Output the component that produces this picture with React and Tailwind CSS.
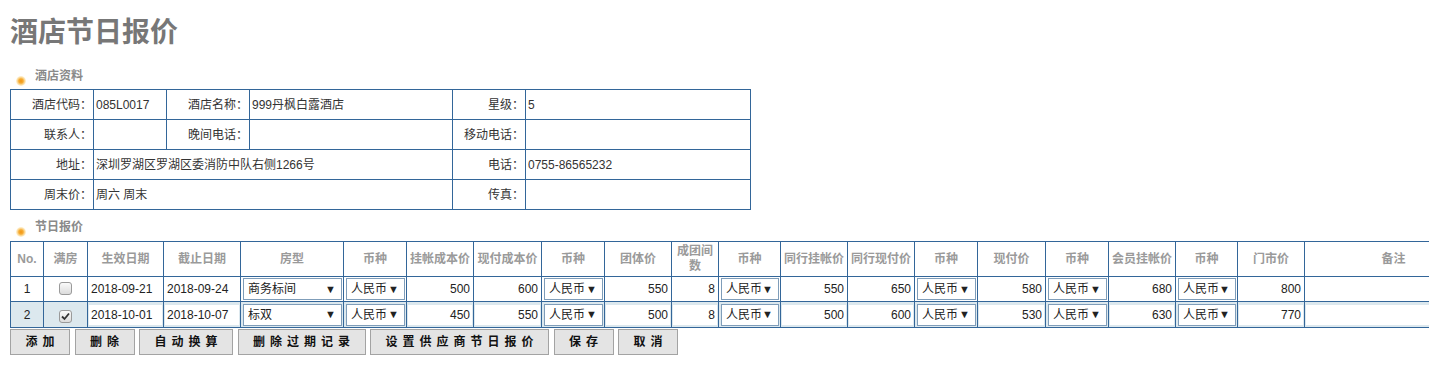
import React from 'react';

const FONT = "font-['Liberation_Sans','Noto_Sans_CJK_SC',sans-serif]";

function Bullet({ id }) {
  return (
    <svg width="10" height="10" viewBox="0 0 10 10" className="shrink-0">
      <defs>
        <radialGradient id={id}>
          <stop offset="0" stopColor="#f29410" />
          <stop offset="0.45" stopColor="#f6ad35" />
          <stop offset="1" stopColor="#fde7b0" stopOpacity="0.5" />
        </radialGradient>
      </defs>
      <circle cx="5" cy="5" r="5" fill={`url(#${id})`} />
    </svg>
  );
}

function SectionTitle({ id, children }) {
  return (
    <div className="flex items-end gap-[9px] pl-[16px]">
      <span className="mb-[-3px]">
        <Bullet id={id} />
      </span>
      <span className="text-[12px] font-bold leading-[14px] text-[#8a8a8a]">{children}</span>
    </div>
  );
}

function Sel({ value }) {
  return (
    <div className="flex h-[22px] w-full items-center justify-between border border-[#7f9db9] bg-white pl-[4px] pr-[5px] text-[12px] text-[#222]">
      <span>{value}</span>
      <span className="text-[11px]">▼</span>
    </div>
  );
}

function Check({ checked }) {
  return (
    <span className="inline-flex h-[13px] w-[13px] items-center justify-center rounded-[3px] border border-[#9a9a9a] bg-gradient-to-b from-[#fafafa] to-[#dcdcdc]">
      {checked && (
        <svg width="9" height="9" viewBox="0 0 9 9">
          <path d="M1 4.5 L3.5 7 L8 1.5" fill="none" stroke="#333" strokeWidth="1.8" />
        </svg>
      )}
    </span>
  );
}

function Box({ children, right }) {
  return (
    <div
      className={`flex h-[20px] w-full items-center bg-white px-[2px] text-[12px] text-[#222] ${
        right ? 'justify-end' : 'justify-start'
      }`}
    >
      {children}
    </div>
  );
}

const widths = [33, 44, 76, 77, 103, 63, 67, 68, 63, 67, 47, 62, 67, 67, 63, 68, 63, 67, 62, 67, 178];

const headers = [
  'No.', '满房', '生效日期', '截止日期', '房型', '币种', '挂帐成本价', '现付成本价', '币种', '团体价',
  'TEAM', '币种', '同行挂帐价', '同行现付价', '币种', '现付价', '币种', '会员挂帐价', '币种', '门市价', '备注',
];

const rows = [
  { no: 1, full: false, start: '2018-09-21', end: '2018-09-24', room: '商务标间', v: ['500', '600', '550', '8', '550', '650', '580', '680', '800'] },
  { no: 2, full: true, start: '2018-10-01', end: '2018-10-07', room: '标双', v: ['450', '550', '500', '8', '500', '600', '530', '630', '770'] },
];

const buttons = [
  ['添加', 'w-[60px]'],
  ['删除', 'w-[60px]'],
  ['自动换算', 'w-[94px]'],
  ['删除过期记录', 'w-[128px]'],
  ['设置供应商节日报价', 'w-[179px]'],
  ['保存', 'w-[60px]'],
  ['取消', 'w-[60px]'],
];

export default function App() {
  const td = 'border border-[#336699]';
  const label = `${td} text-right pr-[1px]`;
  const val = `${td} pl-[2px]`;

  return (
    <div className={`${FONT} w-full overflow-hidden bg-white text-[12px] text-[#333]`}>
      {/* Title */}
      <div className="flex h-[60px] items-start pl-[10px] pt-[16px]">
        <h1 className="text-[28px] font-bold leading-[34px] text-[#777]">酒店节日报价</h1>
      </div>

      {/* Hotel info */}
      <div className="flex h-[29px] items-end pb-[6px]">
        <SectionTitle id="b1">酒店资料</SectionTitle>
      </div>
      <div className="pl-[10px]">
        <table className="w-[740px] table-fixed border-collapse">
          <colgroup>
            <col className="w-[83px]" />
            <col className="w-[73px]" />
            <col className="w-[83px]" />
            <col className="w-[203px]" />
            <col className="w-[73px]" />
            <col className="w-[225px]" />
          </colgroup>
          <tbody>
            <tr className="h-[30px]">
              <td className={label}>酒店代码：</td>
              <td className={val}>085L0017</td>
              <td className={label}>酒店名称：</td>
              <td className={val}>999丹枫白露酒店</td>
              <td className={label}>星级：</td>
              <td className={val}>5</td>
            </tr>
            <tr className="h-[30px]">
              <td className={label}>联系人：</td>
              <td className={val}></td>
              <td className={label}>晚间电话：</td>
              <td className={val}></td>
              <td className={label}>移动电话：</td>
              <td className={val}></td>
            </tr>
            <tr className="h-[30px]">
              <td className={label}>地址：</td>
              <td className={val} colSpan={3}>深圳罗湖区罗湖区委消防中队右侧1266号</td>
              <td className={label}>电话：</td>
              <td className={val}>0755-86565232</td>
            </tr>
            <tr className="h-[30px]">
              <td className={label}>周末价：</td>
              <td className={val} colSpan={3}>周六 周末</td>
              <td className={label}>传真：</td>
              <td className={val}></td>
            </tr>
          </tbody>
        </table>
      </div>

      {/* Holiday prices */}
      <div className="flex h-[31px] items-center pt-[2px]">
        <SectionTitle id="b2">节日报价</SectionTitle>
      </div>
      <div className="pl-[10px]">
        <table className="w-[1472px] table-fixed border-collapse">
          <colgroup>
            {widths.map((w, i) => (
              <col key={i} style={{ width: w }} />
            ))}
          </colgroup>
          <thead>
            <tr className="h-[35px]">
              {headers.map((h, i) => (
                <th key={i} className={`${td} p-0 text-center text-[12px] font-bold leading-[15px] text-[#9a9a9a]`}>
                  {h === 'TEAM' ? (
                    <>
                      成团间
                      <br />数
                    </>
                  ) : (
                    h
                  )}
                </th>
              ))}
            </tr>
          </thead>
          <tbody>
            {rows.map((r) => {
              const alt = r.no === 2;
              const bg = alt ? 'bg-[#dce8ee]' : 'bg-white';
              const c = `${td} ${bg} px-[1px] py-0`;
              const s = `${td} ${bg} pl-[2px] pr-[1px] py-0`;
              return (
                <tr key={r.no} className={alt ? 'h-[26px]' : 'h-[25px]'}>
                  <td className={`${td} ${bg} text-center text-[12px] text-[#222]`}>{r.no}</td>
                  <td className={`${td} ${bg} text-center`}>
                    <span className="relative top-[2px]">
                      <Check checked={r.full} />
                    </span>
                  </td>
                  <td className={c}><Box>{r.start}</Box></td>
                  <td className={c}><Box>{r.end}</Box></td>
                  <td className={s}><Sel value={r.room} /></td>
                  <td className={s}><Sel value="人民币" /></td>
                  <td className={c}><Box right>{r.v[0]}</Box></td>
                  <td className={c}><Box right>{r.v[1]}</Box></td>
                  <td className={s}><Sel value="人民币" /></td>
                  <td className={c}><Box right>{r.v[2]}</Box></td>
                  <td className={c}><Box right>{r.v[3]}</Box></td>
                  <td className={s}><Sel value="人民币" /></td>
                  <td className={c}><Box right>{r.v[4]}</Box></td>
                  <td className={c}><Box right>{r.v[5]}</Box></td>
                  <td className={s}><Sel value="人民币" /></td>
                  <td className={c}><Box right>{r.v[6]}</Box></td>
                  <td className={s}><Sel value="人民币" /></td>
                  <td className={c}><Box right>{r.v[7]}</Box></td>
                  <td className={s}><Sel value="人民币" /></td>
                  <td className={c}><Box right>{r.v[8]}</Box></td>
                  <td className={c}><Box></Box></td>
                </tr>
              );
            })}
          </tbody>
        </table>
      </div>

      {/* Buttons */}
      <div className="flex gap-[4.5px] pl-[10px] pb-[14px] pt-[1px]">
        {buttons.map(([t, w]) => (
          <button
            key={t}
            className={`${w} h-[26px] border border-[#a3a3a3] bg-[#e4e4e4] pl-[5px] text-[12px] font-bold tracking-[5px] text-[#111]`}
          >
            {t}
          </button>
        ))}
      </div>
    </div>
  );
}
